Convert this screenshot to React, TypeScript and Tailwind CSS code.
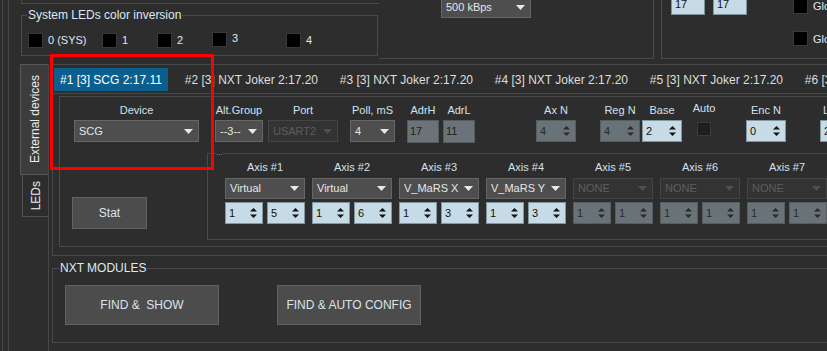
import React from "react";

type Kind = "light" | "gray";

// little triangle used by the combo boxes
const Arrow = ({ dim }: { dim?: boolean }) => (
  <svg width="9" height="5" viewBox="0 0 9 5" className="shrink-0">
    <path d="M0 0H9L4.5 5Z" fill={dim ? "#505050" : "#e8e8e8"} />
  </svg>
);

// up / down arrows of a spin box
const UpDown = ({ color }: { color: string }) => (
  <svg width="7" height="10" viewBox="0 0 7 10" className="shrink-0">
    <path d="M3.5 0L7 3.5H0Z" fill={color} />
    <path d="M0 6.5H7L3.5 10Z" fill={color} />
  </svg>
);

const Select = ({ value, className = "", dim }: { value: string; className?: string; dim?: boolean }) => (
  <div
    className={`flex shrink-0 items-center justify-between overflow-hidden whitespace-nowrap border pl-[4px] pr-[5px] text-[11px] ${
      dim ? "border-[#444444] bg-[#333333] text-[#5e5e5e]" : "border-[#666666] bg-[#4e4e4e] text-[#e6e6e6]"
    } ${className}`}
  >
    <span>{value}</span>
    <Arrow dim={dim} />
  </div>
);

const Spin = ({ value, kind, className = "" }: { value: string; kind: Kind; className?: string }) => (
  <div
    className={`flex shrink-0 items-center justify-between border pl-[3px] pr-[5px] text-[11px] ${
      kind === "light" ? "border-[#8197a2] bg-[#c6dbe6] text-[#111111]" : "border-[#565d61] bg-[#697277] text-[#2a2a2a]"
    } ${className}`}
  >
    <span>{value}</span>
    <UpDown color={kind === "light" ? "#111111" : "#2a2a2a"} />
  </div>
);

const Box = () => <div className="h-[15px] w-[15px] shrink-0 border border-[#3a3a3a] bg-black" />;

const Label = ({ children, className = "" }: { children: React.ReactNode; className?: string }) => (
  <div className={`h-[13px] whitespace-nowrap text-[11px] leading-[13px] text-[#d3e1ee] ${className}`}>{children}</div>
);

const axes = [
  { name: "Axis #1", dev: "Virtual", a: "1", b: "5", on: true },
  { name: "Axis #2", dev: "Virtual", a: "1", b: "6", on: true },
  { name: "Axis #3", dev: "V_MaRS X", a: "1", b: "3", on: true },
  { name: "Axis #4", dev: "V_MaRS Y", a: "1", b: "3", on: true },
  { name: "Axis #5", dev: "NONE", a: "1", b: "1", on: false },
  { name: "Axis #6", dev: "NONE", a: "1", b: "1", on: false },
  { name: "Axis #7", dev: "NONE", a: "1", b: "1", on: false },
  { name: "Axis #8", dev: "NONE", a: "1", b: "1", on: false },
];

const tabs = ["#2 [3] NXT Joker 2:17.20", "#3 [3] NXT Joker 2:17.20", "#4 [3] NXT Joker 2:17.20", "#5 [3] NXT Joker 2:17.20", "#6 [3] NXT Joker 2:17.20"];

const leds = [
  { label: "0 (SYS)", w: "w-[74px]" },
  { label: "1", w: "w-[55px]" },
  { label: "2", w: "w-[55px]" },
  { label: "3", w: "w-[74px]" },
  { label: "4", w: "w-[60px]" },
];

export default function App() {
  return (
    <div className="relative flex h-[351px] w-[827px] overflow-hidden bg-[#2d2d2d] font-['Liberation_Sans',Arial,sans-serif] text-[#e0e8f0]">
      <div className="w-[2px] shrink-0" />
      <div className="w-[6px] shrink-0 border-l border-[#454545]" />
      <div className="flex min-w-0 flex-1 flex-col border-l border-[#454545] pl-[11px]">
        {/* top strip */}
        <div className="flex h-[59px] shrink-0">
          <div className="ml-[1px] w-[358px] shrink-0">
            <div className="h-[4px] border-b border-l border-[#4a4a4a]" />
            <fieldset className="mt-[4px] h-[48px] w-[357px] border border-[#4a4a4a] pl-[5px]">
              <legend className="px-[1px] text-[12px] leading-[14px] text-[#dfe8f2]">System LEDs color inversion</legend>
              <div className="ml-[1px] mt-[10px] flex items-center">
                {leds.map((l) => (
                  <div key={l.label} className={`flex shrink-0 items-center ${l.w} ${l.label === "3" ? "-mt-[1px]" : ""}`}>
                    <Box />
                    <span className={`ml-[5px] text-[11px] ${l.label === "3" ? "-mt-[4px]" : ""}`}>{l.label}</span>
                  </div>
                ))}
              </div>
            </fieldset>
          </div>
          <div className="w-[275px] shrink-0 border-b border-r border-[#4a4a4a]">
            <Select value="500 kBps" className="-mt-[4px] ml-[62px] h-[22px] w-[90px]" />
          </div>
          <div className="ml-[7px] flex flex-1 items-start border-b border-l border-[#4a4a4a] pl-[9px]">
            <div className="-mt-[7px] flex h-[22px] w-[34px] shrink-0 items-center border border-[#7f939d] bg-[#c6dbe6] pl-[3px] text-[11px] text-[#111111]">17</div>
            <div className="-mt-[7px] ml-[8px] flex h-[22px] w-[34px] shrink-0 items-center border border-[#7f939d] bg-[#c6dbe6] pl-[3px] text-[11px] text-[#111111]">17</div>
            <div className="ml-[46px] flex flex-col">
              <div className="-mt-[2px] flex items-center">
                <Box />
                <span className="ml-[5px] whitespace-nowrap text-[11px]">Global inversion</span>
              </div>
              <div className="mt-[16px] flex items-center">
                <Box />
                <span className="ml-[5px] whitespace-nowrap text-[11px]">Global blink</span>
              </div>
            </div>
          </div>
        </div>

        {/* main tab widget */}
        <div className="mt-[5px] flex flex-1">
          <div className="flex w-[28px] shrink-0 flex-col">
            <div className="flex h-[111px] items-center justify-center border border-r-0 border-[#585858] bg-[#3c3c3c]">
              <span className="rotate-180 whitespace-nowrap text-[12px] text-[#ececec] [writing-mode:vertical-rl]">External devices</span>
            </div>
            <div className="ml-[2px] flex h-[42px] items-center justify-center border-b border-l border-[#505050]">
              <span className="rotate-180 text-[12px] text-[#ececec] [writing-mode:vertical-rl]">LEDs</span>
            </div>
          </div>

          <div className="flex flex-1 flex-col border-l border-[#484848] pl-[3px]">
            {/* device panel */}
            <div className="flex h-[192px] w-[820px] shrink-0 flex-col border border-[#4a4a4a]">
              <div className="flex h-[29px] shrink-0 items-start border-b border-[#4a4a4a]">
                <div className="ml-[1px] mt-[3px] flex h-[23px] shrink-0 items-center bg-[#0a5f8f] px-[6px] text-[12px] text-white">#1 [3] SCG 2:17.11</div>
                <div className="ml-[17px] flex h-[29px] items-center">
                  {tabs.map((t) => (
                    <div key={t} className="w-[155px] shrink-0 whitespace-nowrap text-[12px] text-[#dedede]">
                      {t}
                    </div>
                  ))}
                </div>
              </div>

              <div className="ml-[6px] mt-[2px] flex h-[151px] shrink-0 border-b border-l border-t border-[#4a4a4a]">
                {/* device + stat */}
                <div className="flex w-[147px] shrink-0 flex-col pt-[7px]">
                  <div className="ml-[14px] flex w-[125px] flex-col items-center">
                    <Label>Device</Label>
                    <Select value="SCG" className="mt-[3px] h-[22px] w-[125px]" />
                  </div>
                  <div className="ml-[12px] mt-[55px] flex h-[32px] w-[75px] items-center justify-center border border-[#626262] bg-[#4c4c4c] text-[12px] text-[#dbe3ec]">
                    Stat
                  </div>
                </div>

                <div className="flex flex-col pt-[7px]">
                  {/* parameters row */}
                  <div className="flex pl-[8px]">
                    <div className="flex w-[48px] shrink-0 flex-col items-center">
                      <Label>Alt.Group</Label>
                      <Select value="--3--" className="mt-[3px] h-[22px] w-[48px]" />
                    </div>
                    <div className="ml-[5px] flex w-[70px] shrink-0 flex-col items-center">
                      <Label>Port</Label>
                      <Select value="USART2" dim className="mt-[3px] h-[22px] w-[70px]" />
                    </div>
                    <div className="ml-[12px] flex w-[45px] shrink-0 flex-col items-center">
                      <Label>Poll, mS</Label>
                      <Select value="4" className="mt-[3px] h-[22px] w-[45px]" />
                    </div>
                    <div className="ml-[12px] flex w-[32px] shrink-0 flex-col items-center">
                      <Label>AdrH</Label>
                      <div className="mt-[3px] flex h-[23px] w-[32px] items-center border border-[#555c60] bg-[#6b7378] pl-[2px] text-[11px] text-[#1c1c1c]">17</div>
                    </div>
                    <div className="ml-[4px] flex w-[32px] shrink-0 flex-col items-center">
                      <Label>AdrL</Label>
                      <div className="mt-[3px] flex h-[23px] w-[32px] items-center border border-[#555c60] bg-[#6b7378] pl-[2px] text-[11px] text-[#1c1c1c]">11</div>
                    </div>
                    <div className="ml-[61px] flex w-[40px] shrink-0 flex-col items-center">
                      <Label>Ax N</Label>
                      <Spin value="4" kind="gray" className="mt-[3px] h-[22px] w-[40px]" />
                    </div>
                    <div className="ml-[24px] flex w-[40px] shrink-0 flex-col items-center">
                      <Label>Reg N</Label>
                      <Spin value="4" kind="gray" className="mt-[3px] h-[22px] w-[40px]" />
                    </div>
                    <div className="ml-[2px] flex w-[40px] shrink-0 flex-col items-center">
                      <Label>Base</Label>
                      <Spin value="2" kind="light" className="mt-[3px] h-[22px] w-[40px]" />
                    </div>
                    <div className="ml-[15px] flex w-[14px] shrink-0 flex-col items-center">
                      <Label className="-mt-[2px]">Auto</Label>
                      <div className="mt-[7px] h-[14px] w-[14px] border border-[#3a3a3a] bg-[#1e1e1e]" />
                    </div>
                    <div className="ml-[35px] flex w-[40px] shrink-0 flex-col items-center">
                      <Label>Enc N</Label>
                      <Spin value="0" kind="light" className="mt-[3px] h-[22px] w-[40px]" />
                    </div>
                    <div className="ml-[34px] flex w-[40px] shrink-0 flex-col items-center">
                      <Label>Limit N</Label>
                      <Spin value="2" kind="light" className="mt-[3px] h-[22px] w-[40px]" />
                    </div>
                  </div>

                  {/* axes */}
                  <fieldset className="mt-[6px] h-[91px] w-[700px] border border-[#4a4a4a] pl-[8px]">
                    <legend className="text-[8px] leading-[8px] text-[#9aa6b4]">...</legend>
                    <div className="flex gap-[7px] pl-[9px] pt-[4px]">
                      {axes.map((ax) => (
                        <div key={ax.name} className="flex w-[80px] shrink-0 flex-col items-center">
                          <Label>{ax.name}</Label>
                          <Select value={ax.dev} dim={!ax.on} className="mt-[4px] h-[21px] w-[80px]" />
                          <div className="mt-[3px] flex w-[80px] justify-between">
                            <Spin value={ax.a} kind={ax.on ? "light" : "gray"} className="h-[22px] w-[38px]" />
                            <Spin value={ax.b} kind={ax.on ? "light" : "gray"} className="h-[22px] w-[38px]" />
                          </div>
                        </div>
                      ))}
                    </div>
                  </fieldset>
                </div>
              </div>
            </div>

            {/* NXT modules */}
            <fieldset className="mt-[5px] h-[82px] w-[820px] shrink-0 border border-[#4a4a4a] pl-[6px]">
              <legend className="px-[1px] text-[12px] leading-[14px] text-[#dfe8f2]">NXT MODULES</legend>
              <div className="ml-[6px] mt-[10px] flex">
                <div className="flex h-[40px] w-[154px] items-center justify-center border border-[#626262] bg-[#4c4c4c] text-[12px] text-[#dbe3ec]">
                  FIND &amp;&nbsp; SHOW
                </div>
                <div className="ml-[58px] flex h-[40px] w-[144px] items-center justify-center border border-[#626262] bg-[#4c4c4c] text-[12px] text-[#dbe3ec]">
                  FIND &amp; AUTO CONFIG
                </div>
              </div>
            </fieldset>
          </div>
        </div>
      </div>

      {/* red highlight drawn over the device block */}
      <div className="pointer-events-none absolute left-[50px] top-[54px] h-[116px] w-[164px] border-[3px] border-[#ff0000]" />
    </div>
  );
}
